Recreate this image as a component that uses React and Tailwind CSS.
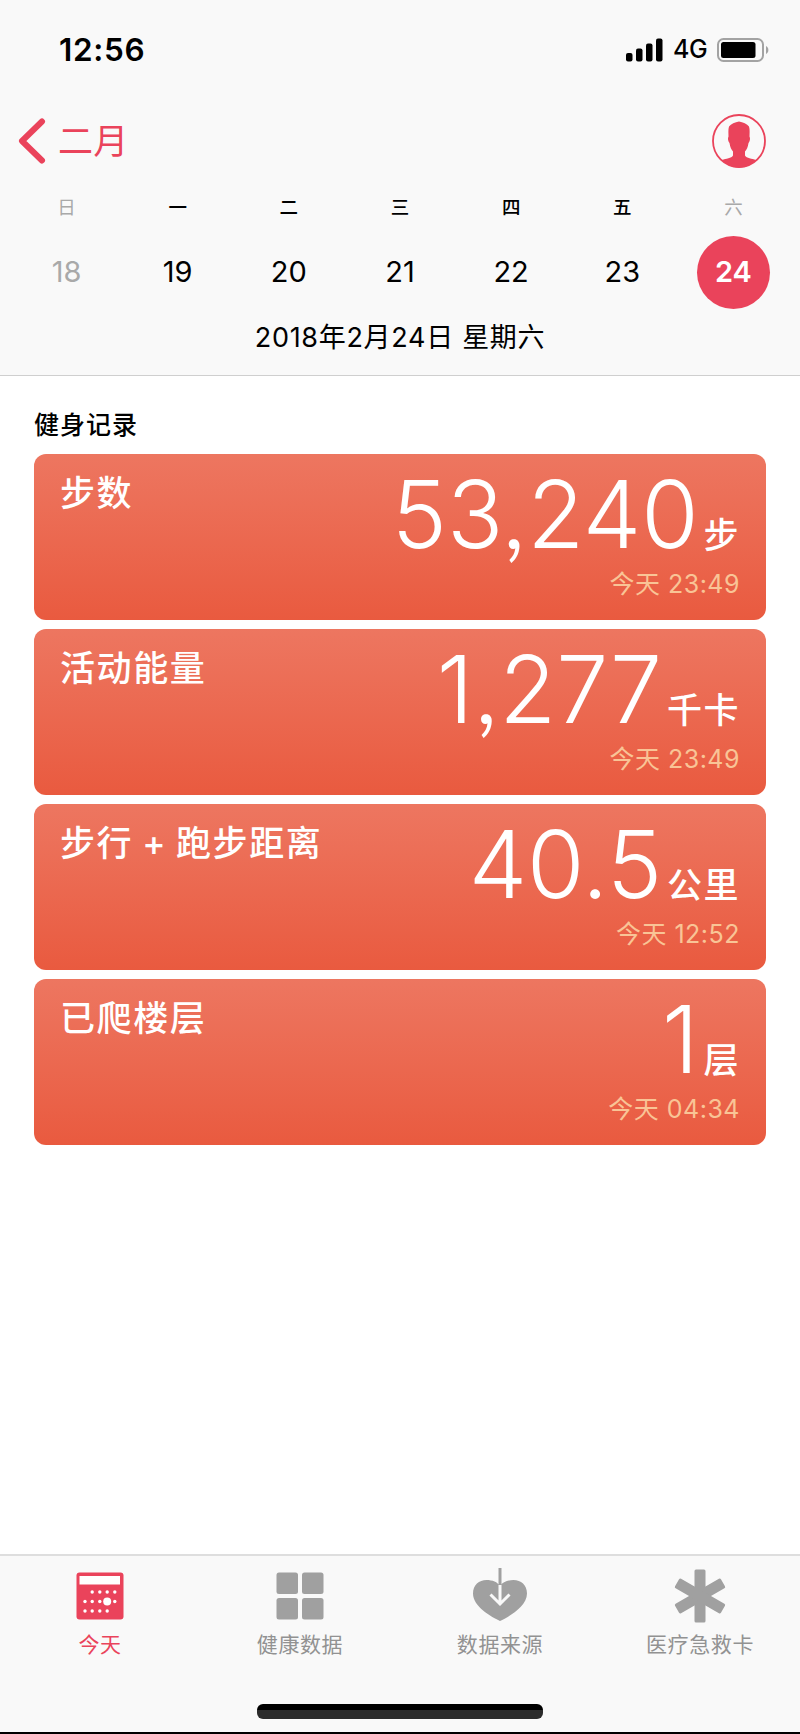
import React from 'react';

const week = [
    { name: '日', day: 18, muted: true },
    { name: '一', day: 19 },
    { name: '二', day: 20 },
    { name: '三', day: 21 },
    { name: '四', day: 22 },
    { name: '五', day: 23 },
    { name: '六', day: 24, muted: true, selected: true }
];

const records = [
    { title: '步数', value: '53,240', unit: '步', time: '23:49' },
    { title: '活动能量', value: '1,277', unit: '千卡', time: '23:49' },
    { title: '步行 + 跑步距离', value: '40.5', unit: '公里', time: '12:52' },
    { title: '已爬楼层', value: '1', unit: '层', time: '04:34' }
];

const CalendarIcon = () => (
    <svg width="48" height="48" viewBox="0 0 48 48" fill="none">
        <rect x="0.5" y="0.5" width="47" height="47" rx="3" fill="#ea435b" />
        <rect x="3.5" y="4" width="40.5" height="8.5" fill="#fff" />
        <g fill="#fff">
            {[16.2, 23.8, 31.2, 38.8].map((x) => <circle key={x} cx={x} cy="20" r="1.7" />)}
            {[9, 16.2, 23.8, 38.8].map((x) => <circle key={x} cx={x} cy="29.5" r="1.7" />)}
            {[9, 16.2, 23.8, 31.2].map((x) => <circle key={x} cx={x} cy="39" r="1.7" />)}
            <circle cx="31.2" cy="29.5" r="4" />
        </g>
    </svg>
);

const GridIcon = () => (
    <svg width="48" height="48" viewBox="0 0 48 48" fill="#a0a0a0">
        <rect x="0.5" y="0.5" width="21.5" height="21.5" rx="2.5" />
        <rect x="26" y="0.5" width="21.5" height="21.5" rx="2.5" />
        <rect x="0.5" y="26" width="21.5" height="21.5" rx="2.5" />
        <rect x="26" y="26" width="21.5" height="21.5" rx="2.5" />
    </svg>
);

const HeartIcon = () => (
    <svg className="mb-[3px]" width="54" height="54" viewBox="0 0 54 54" fill="none">
        <path d="M27 53C18 48.500 0 38.500 0 25.500C0 17 6 12 13.500 12C19.500 12 24.500 14 27 18C29.500 14 34.500 12 40.500 12C48 12 54 17 54 25.500C54 38.500 36 48.500 27 53Z" fill="#a0a0a0" />
        <path d="M27 17V36M17.500 26.500L27 36L36.500 26.500" stroke="#f9f9f9" strokeWidth="3" />
        <path d="M27 0V17" stroke="#a0a0a0" strokeWidth="3" />
    </svg>
);

const AsteriskIcon = () => (
    <svg width="54" height="54" viewBox="0 0 54 54" fill="#a0a0a0">
        <rect x="21.500" y="0.500" width="11" height="53" rx="1.500" />
        <rect x="21.500" y="0.500" width="11" height="53" rx="1.500" transform="rotate(60 27 27)" />
        <rect x="21.500" y="0.500" width="11" height="53" rx="1.500" transform="rotate(-60 27 27)" />
    </svg>
);

const tabs = [
    { label: '今天', Icon: CalendarIcon, active: true },
    { label: '健康数据', Icon: GridIcon },
    { label: '数据来源', Icon: HeartIcon },
    { label: '医疗急救卡', Icon: AsteriskIcon }
];

const StatusBar = () => (
    <div className="h-[98px] pt-[1px] pl-[59px] pr-[31px] flex items-center justify-between">
        <span className="text-[31.500px] font-semibold tracking-[0.700px]">12:56</span>
        <div className="flex items-center">
            <svg width="37" height="24" viewBox="0 0 37 24" fill="#000">
                <rect x="0" y="15" width="6.500" height="8.500" rx="2" />
                <rect x="10" y="10.500" width="6.500" height="13" rx="2" />
                <rect x="20" y="5.500" width="6.500" height="18" rx="2" />
                <rect x="30" y="0.500" width="6.500" height="23" rx="2" />
            </svg>
            <span className="ml-[10px] text-[25px] font-medium tracking-[-0.600px]">4G</span>
            <svg className="ml-[10px]" width="52" height="24" viewBox="0 0 52 24" fill="none">
                <rect x="1" y="1" width="45" height="22" rx="5.500" stroke="#a3a3a3" strokeWidth="2" />
                <rect x="4" y="4" width="34.500" height="16" rx="2.500" fill="#000" />
                <path d="M49 8C52.200 9.500 52.200 14.500 49 16Z" fill="#a3a3a3" />
            </svg>
        </div>
    </div>
);

const NavBar = () => (
    <div className="h-[86px] pl-[18px] pr-[34px] flex items-center justify-between text-[#ea435b]">
        <div className="flex items-center">
            <svg width="28" height="46" viewBox="0 0 28 46" fill="none">
                <path d="M24 3.500L4 23L24 42.500" stroke="currentColor" strokeWidth="6" strokeLinecap="round" strokeLinejoin="round" />
            </svg>
            <span className="ml-[12px] pt-[1px] text-[35px] leading-none tracking-[0.300px]">二月</span>
        </div>
        <svg width="54" height="54" viewBox="0 0 54 54" fill="none">
            <circle cx="27" cy="27" r="26" stroke="currentColor" strokeWidth="1.800" />
            <path d="M27 7.500C31 8 35 10 37 12.500C38 15.500 37.500 20 37.500 22.500C38.500 24 38 27.500 36.500 29C36 33 34.500 36 33 37.500V41.500C34.500 44.500 40 44.500 44 46C39.500 51 33.500 53.500 27 53.500C20.500 53.500 14.500 51 10 46C14 44.500 19.500 44.500 21 41.500V37.500C19.500 36 18 33 17.500 29C16 27.500 15.500 24 16.500 22.500C16.500 20 16 15.500 17 12.500C19 10 23 8 27 7.500Z" fill="currentColor" />
        </svg>
    </div>
);

const WeekStrip = () => (
    <div className="mx-[11px] grid grid-cols-7">
        {week.map(({ name, day, muted, selected }) => (
            <div key={day} className="flex flex-col items-center">
                <span className={muted ? 'h-[46px] leading-[46px] text-[18.500px] text-[#a9a9a9]' : 'h-[46px] leading-[46px] text-[18.500px] font-medium'}>
                    {name}
                </span>
                <span
                    className={
                        selected
                            ? 'mt-[6px] size-[73px] pb-[2px] rounded-full bg-[#ea435b] flex items-center justify-center text-[29px] font-semibold text-white'
                            : muted
                                ? 'mt-[6px] size-[73px] pb-[2px] flex items-center justify-center text-[29px] text-[#a9a9a9]'
                                : 'mt-[6px] size-[73px] pb-[2px] flex items-center justify-center text-[29px]'
                    }
                >
                    {day}
                </span>
            </div>
        ))}
    </div>
);

const RecordCard = ({ title, value, unit, time }) => (
    <div className="h-[166px] rounded-[12px] bg-linear-to-b from-[#ed7660] to-[#e95a3f] pl-[26px] pr-[26px] flex justify-between text-white">
        <h3 className="mt-[21px] h-[36px] leading-[36px] text-[35px] font-medium tracking-[1.600px] [word-spacing:-2px] whitespace-pre">{title}</h3>
        <div className="flex flex-col items-end">
            <div className="mt-[13px] h-[94px] flex items-baseline leading-[94px]">
                <span className="text-[93px] font-light tracking-[-0.100px] [font-feature-settings:'ss03']">{value}</span>
                <span className="ml-[5px] text-[35px] font-medium tracking-[1.500px]">{unit}</span>
            </div>
            <span className="mt-[9px] h-[28px] leading-[28px] text-[25px] tracking-[0.500px] text-[#f9c496]">今天 {time}</span>
        </div>
    </div>
);

const TabBar = () => (
    <div className="h-[180px] border-t-2 border-[#dedede] bg-[#f9f9f9] flex flex-col items-center justify-between">
        <div className="w-full grid grid-cols-4">
            {tabs.map(({ label, Icon, active }) => (
                <div key={label} className="flex flex-col items-center">
                    <div className="mt-[11px] h-[58px] flex items-center justify-center">
                        <Icon />
                    </div>
                    <span className={active ? 'mt-[5px] h-[30px] leading-[30px] text-[21px] tracking-[0.600px] text-[#ea435b]' : 'mt-[5px] h-[30px] leading-[30px] text-[21px] tracking-[0.600px] text-[#929292]'}>
                        {label}
                    </span>
                </div>
            ))}
        </div>
        <div className="w-full border-b-2 border-black flex justify-center pb-[13px]">
            <div className="w-[286px] h-[15px] rounded-[6px] bg-linear-to-b from-black from-40% to-[#2b2b2b] to-40%"></div>
        </div>
    </div>
);

const App = () => {
    return (
        <div className="w-[800px] h-[1734px] overflow-hidden bg-white text-black flex flex-col font-['Inter','Noto_Sans_CJK_SC',sans-serif]" lang="zh-CN">
            <header className="h-[376px] bg-[#f9f9f9] border-b border-[#cfcfcf]">
                <StatusBar />
                <NavBar />
                <WeekStrip />
                <div className="mt-[9px] h-[40px] leading-[40px] text-center text-[27px] tracking-[0.700px]">2018年2月24日 星期六</div>
            </header>
            <main className="flex-1 px-[34px]">
                <h2 className="mt-[31px] h-[36px] leading-[36px] text-[25px] font-medium tracking-[1px]">健身记录</h2>
                <div className="mt-[11px] flex flex-col gap-[9px]">
                    {records.map((record) => (
                        <RecordCard key={record.title} {...record} />
                    ))}
                </div>
            </main>
            <TabBar />
        </div>
    );
};

export default App;
